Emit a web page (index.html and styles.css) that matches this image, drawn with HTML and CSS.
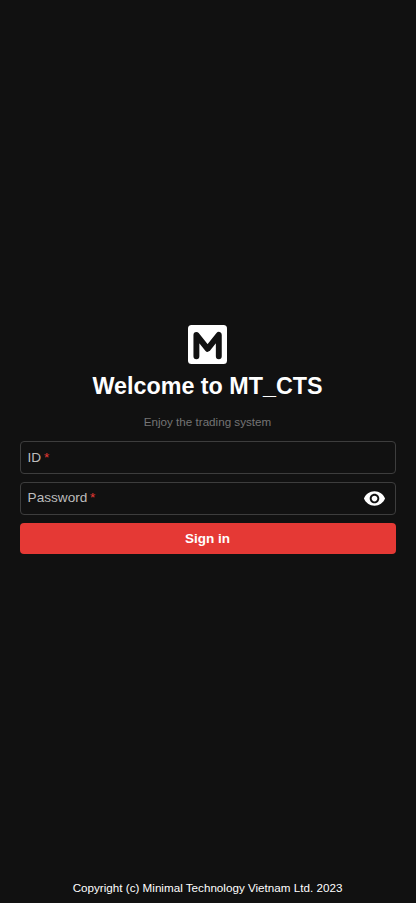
FILE: index.html
```html
<!DOCTYPE html>
<html lang="en">
<head>
<meta charset="utf-8">
<title>MT_CTS</title>
<link rel="stylesheet" href="styles.css">
</head>
<body>
<main class="login">
  <svg class="logo" viewBox="0 0 39 39" aria-hidden="true"><rect width="39" height="39" rx="3.5" fill="#fff"/><path d="M8.4 31.2V9.9L19.6 23.8 30.8 9.9V31.2" fill="none" stroke="#111" stroke-width="5.9" stroke-linecap="round" stroke-linejoin="round"/></svg>
  <h1 class="title">Welcome to MT_CTS</h1>
  <p class="subtitle">Enjoy the trading system</p>
  <form class="form">
    <div class="field"><span>ID<span class="required">*</span></span></div>
    <div class="field"><span class="password-label">Password<span class="required">*</span></span>
      <svg class="eye" viewBox="0 0 24 24" aria-hidden="true"><path fill="#fff" d="M12 4.5C7 4.5 2.73 7.61 1 12c1.73 4.39 6 7.5 11 7.5s9.27-3.11 11-7.5c-1.73-4.39-6-7.5-11-7.5zM12 17c-2.76 0-5-2.24-5-5s2.24-5 5-5 5 2.24 5 5-2.24 5-5 5zm0-8c-1.66 0-3 1.34-3 3s1.34 3 3 3 3-1.34 3-3-1.34-3-3-3z"/></svg>
    </div>
    <button class="submit" type="button">Sign in</button>
  </form>
</main>
<footer class="footer">Copyright (c) Minimal Technology Vietnam Ltd. 2023</footer>
</body>
</html>
```
FILE: styles.css
```css
* { box-sizing: border-box; }
body {
  margin: 0;
  height: 903px;
  display: flex;
  flex-direction: column;
  background: #111;
  color: #fff;
  font-family: "Liberation Sans", Arial, sans-serif;
}
.login {
  flex: 1;
  display: flex;
  flex-direction: column;
  align-items: center;
  padding: 325px 20px 0;
}
.logo { width: 39px; height: 39px; margin-right: 1px; }
.title { margin: 6px 1px 0 0; font-size: 23.3px; line-height: 32px; font-weight: 700; }
.subtitle { margin: 12px 1px 0 0; font-size: 11.65px; line-height: 16px; color: #757575; }
.form { width: 100%; margin-top: 11px; display: flex; flex-direction: column; gap: 8px; }
.field {
  height: 33px;
  border: 1px solid #3d3d3d;
  border-radius: 4px;
  padding: 0 9px 0 6.6px;
  display: flex;
  align-items: center;
  justify-content: space-between;
  font-size: 13.6px;
  color: #bdbdbd;
}
.required { color: #e53935; margin-left: 2.7px; }
.password-label { padding-bottom: 2px; }
.eye { width: 23px; height: 23px; }
.submit {
  height: 31px;
  border: 0;
  border-radius: 4px;
  padding: 0 1px 0 0;
  background: #e53935;
  color: #fff;
  font: 700 13.5px "Liberation Sans", Arial, sans-serif;
}
.footer { height: 30px; line-height: 30px; padding-right: 1px; text-align: center; font-size: 11.67px; }
```
